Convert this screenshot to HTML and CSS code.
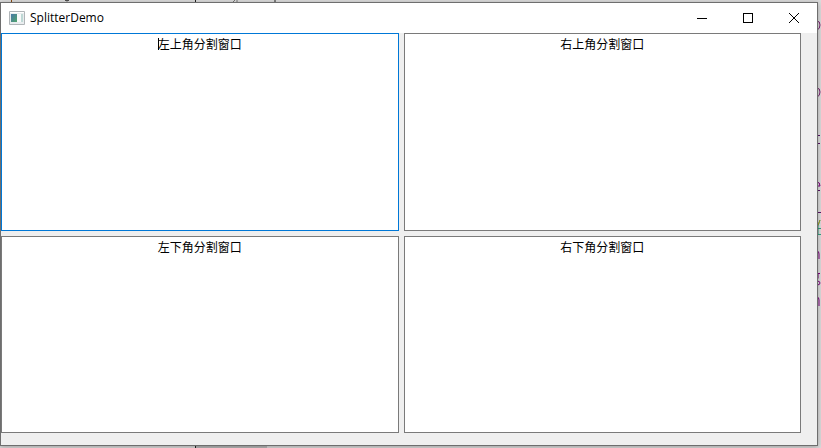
FILE: index.html
```html
<!DOCTYPE html>
<html lang="zh-CN">
<head>
<meta charset="utf-8">
<title>SplitterDemo</title>
<link rel="stylesheet" href="styles.css">
</head>
<body>
<svg class="edge edge-top" width="821" height="448" aria-hidden="true">
  <path d="M11.500 0v2" stroke="#8a4a10"/>
  <path d="M65 0q2 2 4 0M275 0v2" stroke="#222" fill="none"/>
  <path d="M195.500 0v448" stroke="#222"/>
  <path d="M196 446h71v2h-71z" fill="#b8b8b8"/>
  <path d="M233 2l2-2M237 2V0" stroke="#777"/>
</svg>
<svg class="edge edge-right" width="5" height="448" aria-hidden="true">
  <path d="M1 21q3 0 3 4t-3 5M1 88q3 0 3 4t-3 5" stroke="#7a2070" fill="none"/>
  <path d="M1 135.500h3M1 143.500h3M1 190.500h3M1 212.500h4" stroke="#5a1468"/>
  <path d="M1 107.500h1M1 119.500h1M1 154.500h1M1 166.500h1" stroke="#208080"/>
  <path d="M1 182q3 0 3 4H1" stroke="#800080" fill="none"/>
  <path d="M4 220L2 226v8M1 228.500h4M1 234.500h4" stroke="#35a080" fill="none"/>
  <path d="M4 220l-2 5" stroke="#b0a020"/>
  <path d="M1 251q2 0 2 3v5M1 297q2 0 2 3v6" stroke="#800080" fill="none"/>
  <path d="M4 273.500H1M2 274v4l-1 2M1 281q3 0 3 2t-3 2" stroke="#800080" fill="none"/>
</svg>
<main class="window">
  <header class="titlebar">
    <svg class="app-icon" width="16" height="14" viewBox="0 0 16 14" aria-hidden="true">
      <defs>
        <linearGradient id="screen" x1="0" y1="0" x2="1" y2="1">
          <stop offset="0" stop-color="#4878a8"/>
          <stop offset="1" stop-color="#52a56c"/>
        </linearGradient>
      </defs>
      <path d="M.5.5h15v13H.5z" fill="#e9edef" stroke="#b0b5b8"/>
      <path d="M1 1h14v1H1z" fill="#fff"/>
      <path d="M2 3h6v8H2z" fill="url(#screen)"/>
      <path d="M8 3h4v8H8z" fill="#f8fafa"/>
      <path d="M12 3h2v8h-2z" fill="#bed8d5"/>
    </svg>
    <h1 class="title">SplitterDemo</h1>
    <button class="control" aria-label="最小化"><svg width="10" height="10" aria-hidden="true"><path d="M0 5.500h10"/></svg></button>
    <button class="control" aria-label="最大化"><svg width="10" height="10" aria-hidden="true"><path d="M.5.5h9v9h-9z"/></svg></button>
    <button class="control" aria-label="关闭"><svg class="close" width="10" height="10" aria-hidden="true"><path d="M0 0l10 10M10 0L0 10"/></svg></button>
  </header>
  <section class="splitter">
    <div class="pane active"><textarea aria-label="左上角">左上角分割窗口</textarea><span class="caret"></span></div>
    <div class="pane"><textarea aria-label="右上角">右上角分割窗口</textarea></div>
    <div class="pane"><textarea aria-label="左下角">左下角分割窗口</textarea></div>
    <div class="pane"><textarea aria-label="右下角">右下角分割窗口</textarea></div>
  </section>
</main>
</body>
</html>
```
FILE: styles.css
```css
* {
  box-sizing: border-box;
}

body {
  margin: 0;
  height: 100vh;
  padding: 2px 3px 2px 0;
  background: #dcdcdc;
  font-family: "Open Sans", "Noto Sans CJK SC", sans-serif;
  font-size: 12px;
  color: #000;
  overflow: hidden;
}

.edge {
  position: absolute;
  top: 0;
}

.edge-top {
  left: 0;
}

.edge-right {
  right: 0;
}

.window {
  position: relative;
  display: flex;
  flex-direction: column;
  height: 100%;
  border: 1px solid #6e6e6e;
  background: #efefef;
  box-shadow: 0 1px 5px rgba(0, 0, 0, 0.3);
}

.titlebar {
  display: flex;
  align-items: center;
  flex: 0 0 30px;
  padding-left: 8px;
  background: #fff;
}

.title {
  flex: 1;
  margin: 0 0 0 5px;
  font-size: 12px;
  line-height: 16px;
  font-weight: 400;
}

.control {
  display: flex;
  align-items: center;
  justify-content: center;
  width: 46px;
  height: 30px;
  padding: 0;
  border: 0;
  background: none;
}

.control svg {
  fill: none;
  stroke: #000;
  shape-rendering: crispEdges;
}

.control .close {
  shape-rendering: auto;
}

.splitter {
  flex: 1;
  display: grid;
  grid-template-columns: 1fr 1fr;
  grid-template-rows: 1fr 1fr;
  gap: 5px;
  padding: 0 16px 12px 0;
}

.pane {
  position: relative;
  display: flex;
  border: 1px solid #7a7a7a;
  background: #fff;
}

.active {
  border-color: #0078d7;
}

.pane textarea {
  flex: 1;
  min-width: 0;
  margin: 0;
  padding: 2px 4px;
  border: 0;
  outline: 0;
  resize: none;
  background: none;
  color: #000;
  font-family: "Noto Sans CJK SC", sans-serif;
  font-size: 12px;
  line-height: 16px;
  text-align: center;
}

.caret {
  position: absolute;
  top: 4px;
  left: calc(50% - 42px);
  width: 1px;
  height: 12px;
  background: #000;
}
```
